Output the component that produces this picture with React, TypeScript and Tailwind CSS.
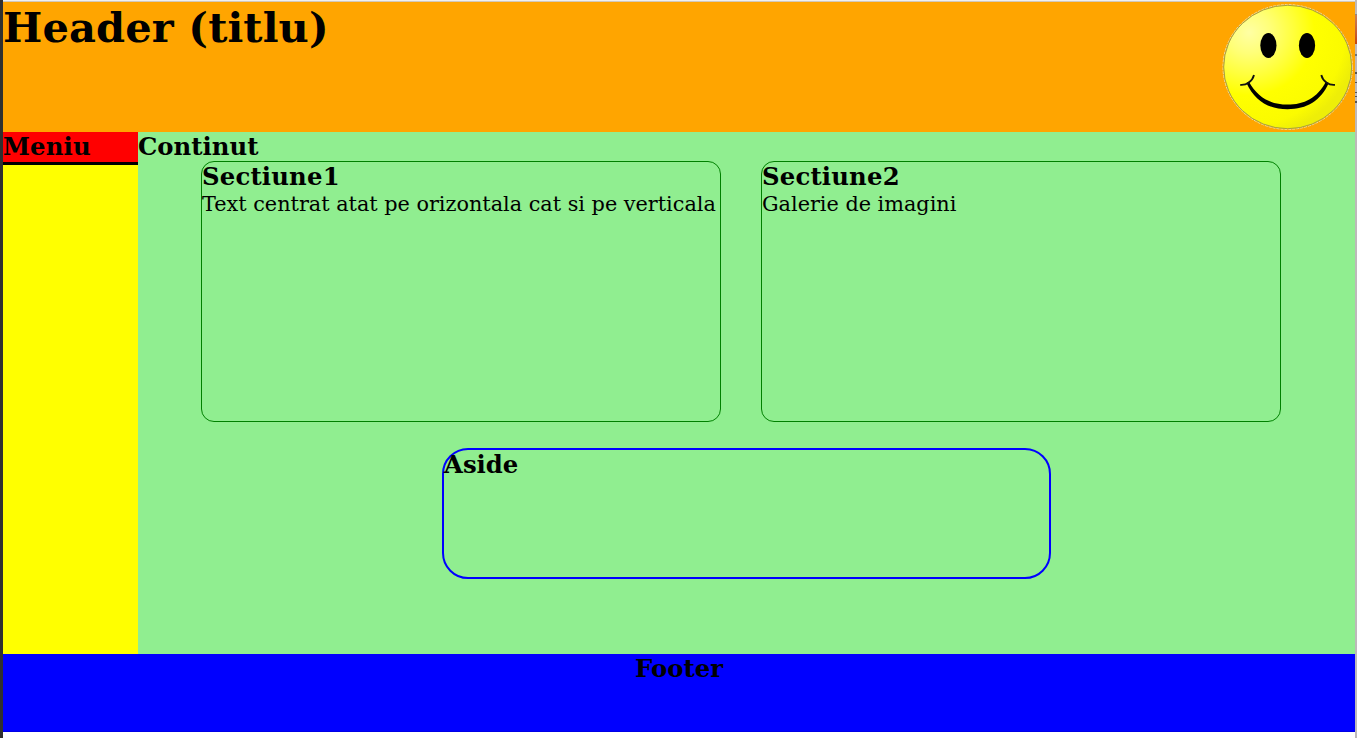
import React from "react";

function Smiley() {
  return (
    <svg className="block h-[130px] w-[130px] shrink-0 overflow-visible" viewBox="0 0 130 130" aria-hidden="true">
      <defs>
        <radialGradient id="face" cx="0.2" cy="0.22" r="0.85">
          <stop offset="0" stopColor="#ffffa4" />
          <stop offset="0.2" stopColor="#ffff78" />
          <stop offset="0.42" stopColor="#ffff38" />
          <stop offset="0.6" stopColor="#ffff00" />
          <stop offset="0.88" stopColor="#fbfb00" />
          <stop offset="1" stopColor="#eeee08" />
        </radialGradient>
      </defs>
      <ellipse cx="62.7" cy="65" rx="64.7" ry="62.4" fill="none" stroke="#f0dca8" strokeWidth="1" strokeDasharray="3 1" />
      <ellipse cx="62.7" cy="65" rx="64" ry="61.7" fill="url(#face)" stroke="#a5a043" strokeWidth="1" />
      <ellipse cx="43.4" cy="43.5" rx="8.1" ry="12.4" fill="#000" />
      <ellipse cx="82" cy="43.5" rx="8.1" ry="12.4" fill="#000" />
      <path d="M23.8 79.5C33 96 46 102.6 62.5 102.6S92.5 96 101 79.5L103.7 81C96 98.5 82 107.2 62.5 107.2S29.5 98.5 21.5 81Z" fill="#000" />
      <path d="M15.2 82.8C21.5 83.5 27.5 79 29 73M96.3 73C97.7 79 103.7 83.5 110 82.8" fill="none" stroke="#111" strokeWidth="1.8" />
    </svg>
  );
}

function Section({ title, text }: { title: string; text: string }) {
  return (
    <section className="h-[261px] w-[520px] rounded-[13px] border border-[#008000]">
      <h3 className="pt-px text-[24.34px] leading-[28px] font-bold tracking-[0.18px]">{title}</h3>
      <p className="whitespace-nowrap leading-[27px] tracking-[-0.01px]">{text}</p>
    </section>
  );
}

export default function App() {
  return (
    <div className="flex h-[738px] w-[1357px] overflow-hidden bg-white text-[20.8px] text-black [font-family:'DejaVu_Serif',serif]">
      <div className="w-[3px] bg-[#303030]" />
      <div className="flex w-[1352px] flex-col">
        <div className="h-[2px] shrink-0 border-b border-[#d2c9bb] bg-[#f0f0f0]" />
        <header className="flex h-[130px] shrink-0 justify-between bg-[#ffa500]">
          <h1 className="text-[41.6px] leading-[52px] font-bold tracking-[0.1px]">Header (titlu)</h1>
          <Smiley />
        </header>
        <div className="flex h-[522px] shrink-0">
          <nav className="w-[135px] bg-[#ffff00]">
            <h3 className="h-[33px] border-b-[3px] border-black bg-[#ff0000] text-[24.34px] leading-[29px] font-bold tracking-[0.15px]">Meniu</h3>
          </nav>
          <main className="flex-1 bg-[#90ee90]">
            <h3 className="h-[29px] text-[24.34px] leading-[29px] font-bold">Continut</h3>
            <div className="ml-[63px] flex gap-[40px]">
              <Section title="Sectiune1" text="Text centrat atat pe orizontala cat si pe verticala" />
              <Section title="Sectiune2" text="Galerie de imagini" />
            </div>
            <aside className="mt-[26px] ml-[304px] h-[131px] w-[609px] rounded-[26px] border-2 border-[#0000ff]">
              <h3 className="text-[24.34px] leading-[29px] font-bold">Aside</h3>
            </aside>
          </main>
        </div>
        <footer className="h-[78px] shrink-0 border-b border-[#0000e5] bg-[#0000ff] text-center">
          <h3 className="text-[24.34px] leading-[29px] font-bold">Footer</h3>
        </footer>
      </div>
      <div className="w-[2px] bg-[#bdb9b9]">
        <div className="h-[14px]" />
        <div className="h-[30px] border-t border-[#888] bg-gradient-to-b from-[#c78058] to-[#c2440c]" />
        <div className="mt-[10px] h-[2px] bg-[#68737c]" />
        <div className="mt-[16px] h-[2px] bg-[#555]" />
        <div className="mt-[8px] h-px bg-[#555]" />
        <div className="mt-[9px] h-[5px] border-y border-[#555]" />
        <div className="mt-[4px] h-[2px] bg-[#555]" />
      </div>
    </div>
  );
}
